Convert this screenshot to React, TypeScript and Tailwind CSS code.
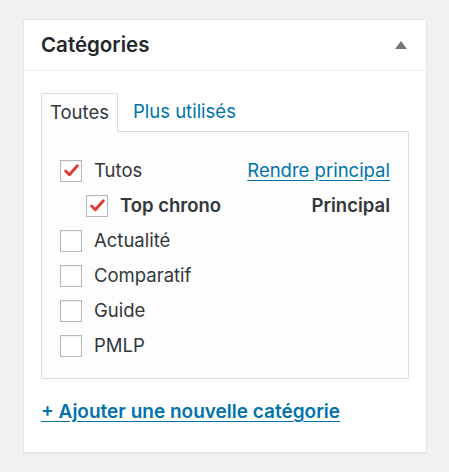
import React from "react";

type Cat = { name: string; checked?: boolean; child?: boolean; bold?: boolean; right?: "link" | "primary" };

const cats: Cat[] = [
  { name: "Tutos", checked: true, right: "link" },
  { name: "Top chrono", checked: true, child: true, bold: true, right: "primary" },
  { name: "Actualité" },
  { name: "Comparatif" },
  { name: "Guide" },
  { name: "PMLP" },
];

function Box({ checked }: { checked?: boolean }) {
  return (
    <span className="w-[22px] h-[22px] shrink-0 border border-[#b4b9be] bg-white shadow-[inset_0_1px_2px_rgba(0,0,0,0.07)] flex items-center justify-center">
      {checked && (
        <svg width="17" height="15" viewBox="0 0 16 14">
          <path d="M2.5 7.5 L6 11 L13.5 2.5" fill="none" stroke="#dd3d36" strokeWidth="2.8" strokeLinecap="round" strokeLinejoin="round" />
        </svg>
      )}
    </span>
  );
}

export default function App() {
  return (
    <div className="w-full h-[472px] bg-[#f1f1f1] pt-[19px] pl-[23px] font-['Inter',sans-serif] text-[#32373c]">
      <div className="w-[404px] h-[434px] bg-white border border-[#e5e5e5] shadow-[0_1px_1px_rgba(0,0,0,0.04)]">
        <div className="h-[51px] border-b border-[#eeeeee] flex items-center justify-between pl-[17px] pr-[19px]">
          <h2 className="text-[20.5px] font-semibold text-[#23282d]">Catégories</h2>
          <svg width="12" height="8" viewBox="0 0 12 8">
            <path d="M0 8 L6 0 L12 8 Z" fill="#72777c" />
          </svg>
        </div>
        <div className="pl-[17px] pr-[17px] pt-[22px]">
          <div className="flex items-end">
            <div className="relative z-10 -mb-px h-[39px] px-[8px] border border-[#dddddd] border-b-0 bg-[#fdfdfd] flex items-center text-[18.5px]">
              Toutes
            </div>
            <a className="px-[15px] h-[38px] flex items-center text-[18.5px] text-[#0073aa]">Plus utilisés</a>
          </div>
          <div className="h-[248px] border border-[#dddddd] bg-[#fdfdfd] pl-[18px] pr-[18px] pt-[21px]">
            {cats.map((c) => (
              <div key={c.name} className={`h-[35px] flex items-center ${c.child ? "pl-[26px]" : ""}`}>
                <Box checked={c.checked} />
                <span className={`ml-[12px] text-[18.5px] ${c.bold ? "font-semibold" : ""}`}>{c.name}</span>
                {c.right === "link" && (
                  <a className="ml-auto text-[18.5px] text-[#0073aa] underline underline-offset-[3px]">Rendre principal</a>
                )}
                {c.right === "primary" && <span className="ml-auto text-[18.5px] font-semibold">Principal</span>}
              </div>
            ))}
          </div>
          <a className="block mt-[19px] text-[19px] font-semibold text-[#0073aa] underline underline-offset-[3px]">
            + Ajouter une nouvelle catégorie
          </a>
        </div>
      </div>
    </div>
  );
}
